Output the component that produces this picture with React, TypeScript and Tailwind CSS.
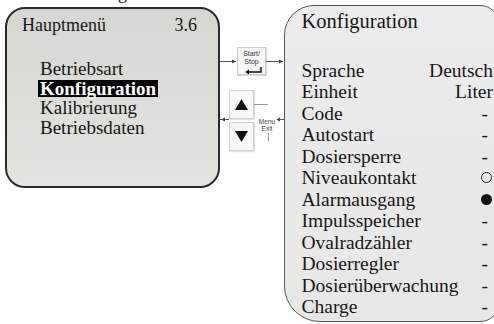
import React from "react";

const rows: { label: string; value: string }[] = [
  { label: "Sprache", value: "Deutsch" },
  { label: "Einheit", value: "Liter" },
  { label: "Code", value: "dash" },
  { label: "Autostart", value: "dash" },
  { label: "Dosiersperre", value: "dash" },
  { label: "Niveaukontakt", value: "open" },
  { label: "Alarmausgang", value: "filled" },
  { label: "Impulsspeicher", value: "dash" },
  { label: "Ovalradzähler", value: "dash" },
  { label: "Dosierregler", value: "dash" },
  { label: "Dosierüberwachung", value: "dash" },
  { label: "Charge", value: "dash" },
];

function Value({ v }: { v: string }) {
  if (v === "dash") return <span className="mr-[5px]">-</span>;
  if (v === "open")
    return <span className="mr-[1px] block w-[11px] h-[11px] rounded-full border-[1.5px] border-[#222]" />;
  if (v === "filled")
    return <span className="mr-[1px] block w-[11px] h-[11px] rounded-full bg-[#111]" />;
  return <span>{v}</span>;
}

function Triangle({ up }: { up: boolean }) {
  return (
    <svg width="13" height="11" viewBox="0 0 13 11">
      {up ? <polygon points="6.5,0 13,11 0,11" fill="#111" /> : <polygon points="0,0 13,0 6.5,11" fill="#111" />}
    </svg>
  );
}

export default function App() {
  const items = ["Betriebsart", "Konfiguration", "Kalibrierung", "Betriebsdaten"];
  return (
    <div className="w-[494px] h-[324px] overflow-hidden bg-white flex items-start [font-family:'Liberation_Serif','Times_New_Roman',serif] text-[#161616]">
      {/* left column */}
      <div className="w-[220px] shrink-0 pl-[5px] flex flex-col">
        <div className="h-[7px] overflow-hidden">
          <div className="ml-[113px] -mt-[16px] text-[18px] leading-[18px]">g</div>
        </div>
        <div className="w-[215px] h-[181px] rounded-[20px] border-2 border-[#2a2a2a] bg-gradient-to-b from-[#d6d6d3] to-[#e3e3e0] pl-[15px] pr-[21px] pt-[6px]">
          <div className="flex justify-between text-[18px] leading-[20px]">
            <span>Hauptmenü</span>
            <span>3.6</span>
          </div>
          <div className="mt-[24px] flex flex-col text-[19px] leading-[19.5px]">
            {items.map((t) => (
              <div key={t} className="h-[19.5px] ml-[16px]">
                {t === "Konfiguration" ? (
                  <span className="inline-block bg-black text-white font-bold px-[2px] leading-[17px] mt-[1px]">{t}</span>
                ) : (
                  <span className="inline-block px-[2px]">{t}</span>
                )}
              </div>
            ))}
          </div>
        </div>
      </div>

      {/* middle connectors and keys */}
      <div className="relative w-[64px] h-[324px] shrink-0">
        <svg className="absolute inset-0" width="64" height="324" viewBox="0 0 64 324">
          <g stroke="#555" strokeWidth="1" fill="none">
            <line x1="0" y1="61.5" x2="16" y2="61.5" />
            <line x1="46" y1="61.5" x2="63" y2="61.5" />
            <line x1="0" y1="119.5" x2="9" y2="119.5" />
            <line x1="56" y1="119.5" x2="64" y2="119.5" />
          </g>
          <g stroke="#999" strokeWidth="1" fill="none">
            <line x1="34" y1="104.5" x2="48" y2="104.5" />
            <line x1="48.5" y1="133" x2="48.5" y2="141" />
          </g>
          <g fill="#444">
            <polygon points="16,61.5 12,59.5 12,63.5" />
            <polygon points="63,61.5 59,59.5 59,63.5" />
            <polygon points="1,119.5 5,117.5 5,121.5" />
            <polygon points="56,119.5 60,117.5 60,121.5" />
          </g>
        </svg>
        <div className="relative flex flex-col">
          <div className="mt-[47px] ml-[17px] w-[29px] h-[28px] border border-[#c9c9c9] bg-[#f7f7f7] shadow-[1px_1px_1px_rgba(0,0,0,0.15)] flex flex-col items-center pt-[2px] [font-family:'Liberation_Sans',Arial,sans-serif] text-[7px] leading-[7.5px] text-[#333]">
            <span>Start/</span>
            <span>Stop</span>
            <svg className="mt-[2px] ml-[4px]" width="18" height="7" viewBox="0 0 18 7">
              <path d="M16 0 V5 H3" stroke="#111" strokeWidth="1.5" fill="none" />
              <polygon points="0,5 4,2.5 4,7.5" fill="#111" />
            </svg>
          </div>
          <div className="flex items-start">
            <div className="ml-[9px] mt-[15px] flex flex-col gap-[3px]">
              <div className="w-[25px] h-[29px] border border-[#d0d0d0] bg-[#f8f8f8] shadow-[1px_1px_1px_rgba(0,0,0,0.12)] flex items-center justify-center">
                <Triangle up />
              </div>
              <div className="w-[25px] h-[29px] border border-[#d0d0d0] bg-[#f8f8f8] shadow-[1px_1px_1px_rgba(0,0,0,0.12)] flex items-center justify-center">
                <Triangle up={false} />
              </div>
            </div>
            <div className="ml-[3px] mt-[44px] w-[20px] flex flex-col items-center [font-family:'Liberation_Sans',Arial,sans-serif] text-[6.5px] leading-[6.5px] text-[#444] bg-white">
              <span>Menu</span>
              <span>Exit</span>
            </div>
          </div>
        </div>
      </div>

      {/* right panel */}
      <div className="shrink-0 mt-[5px] w-[216px] h-[317px] border-[1.5px] border-[#555] rounded-tl-[30px] rounded-tr-[20px] rounded-bl-[36px] rounded-br-[20px] bg-gradient-to-b from-[#ececec] to-[#e7e7e7] pl-[16.5px] pr-[6px] pt-[2.5px]">
        <div className="text-[20.5px] leading-[24px]">Konfiguration</div>
        <div className="mt-[27px] flex flex-col text-[19.5px] leading-[21.5px]">
          {rows.map((r) => (
            <div key={r.label} className="h-[21.5px] flex justify-between items-center">
              <span>{r.label}</span>
              <Value v={r.value} />
            </div>
          ))}
        </div>
      </div>
    </div>
  );
}
